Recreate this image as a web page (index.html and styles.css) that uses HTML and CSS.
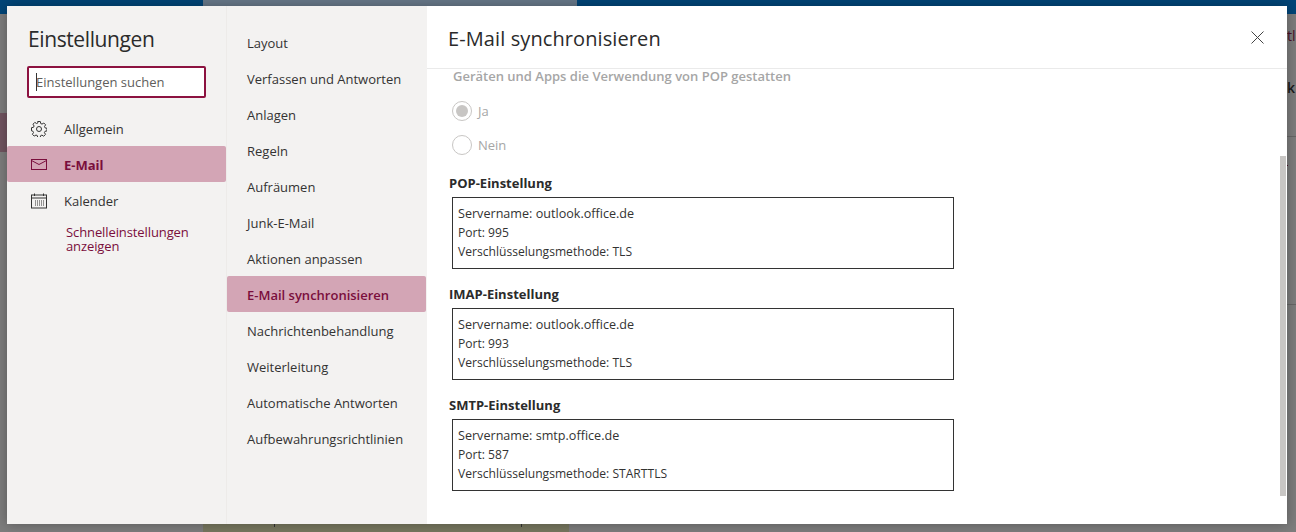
FILE: index.html
```html
<!DOCTYPE html>
<html lang="de">
<head>
<meta charset="utf-8">
<title>Einstellungen</title>
<link rel="stylesheet" href="styles.css">
</head>
<body>
<div class="backdrop">
  <div class="bg-top"><span class="bg-top-light"></span></div>
  <span class="bg-block"></span>
  <span class="bg-text bg-text-a">tlo</span>
  <span class="bg-text bg-text-b">k|y</span>
  <span class="bg-rule bg-rule-a"></span>
  <span class="bg-rule bg-rule-b"></span>
  <span class="bg-dot"></span>
  <span class="bg-bottom"><span class="bg-mark"></span><span class="bg-mark"></span></span>
</div>
<main class="dialog">
  <nav class="col-main">
    <h1 class="title">Einstellungen</h1>
    <div class="search"><span class="caret"></span><span>Einstellungen suchen</span></div>
    <ul class="main-list">
      <li class="main-item">
        <svg class="ico" viewBox="0 0 16 16" fill="none" stroke="#333" stroke-width="1"><circle cx="8" cy="8" r="2.5"/><path d="M6.700.5h2.600l.4 2 1.300.6 1.800-1.100 1.800 1.800-1.100 1.800.6 1.300 1.900.4v2.600l-2 .4-.6 1.300 1.100 1.800-1.800 1.800-1.800-1.100-1.300.6-.4 1.900H6.700l-.4-2-1.300-.6-1.800 1.100-1.800-1.800 1.100-1.800-.6-1.300-1.400-.4V6.700l2-.4.6-1.300-1.100-1.800 1.800-1.800 1.800 1.100 1.300-.6z"/></svg>
        <span>Allgemein</span>
      </li>
      <li class="main-item main-item-on">
        <svg class="ico" viewBox="0 0 16 11" fill="none" stroke="#7a0e3c" stroke-width="1"><rect x=".5" y=".5" width="15" height="10"/><path d="M.5 1.500 8 5.500l7.500-4"/></svg>
        <span>E-Mail</span>
      </li>
      <li class="main-item">
        <svg class="ico" viewBox="0 0 16 15" fill="none" stroke="#333" stroke-width="1"><rect x=".5" y="1.500" width="15" height="13"/><path d="M.5 4.500h15M3.500 0v2.500M12.500 0v2.500"/><path stroke-dasharray="1 1" d="M4 7.500h9M4 9.500h9M4 11.500h9"/></svg>
        <span>Kalender</span>
      </li>
    </ul>
    <a class="quick">Schnelleinstellungen<br>anzeigen</a>
  </nav>
  <nav class="col-sub">
    <ul class="sub-list">
      <li class="sub-item">Layout</li>
      <li class="sub-item">Verfassen und Antworten</li>
      <li class="sub-item">Anlagen</li>
      <li class="sub-item">Regeln</li>
      <li class="sub-item">Aufräumen</li>
      <li class="sub-item">Junk-E-Mail</li>
      <li class="sub-item">Aktionen anpassen</li>
      <li class="sub-item sub-item-on">E-Mail synchronisieren</li>
      <li class="sub-item">Nachrichtenbehandlung</li>
      <li class="sub-item">Weiterleitung</li>
      <li class="sub-item">Automatische Antworten</li>
      <li class="sub-item">Aufbewahrungsrichtlinien</li>
    </ul>
  </nav>
  <section class="col-content">
    <header class="head">
      <h2 class="head-title">E-Mail synchronisieren</h2>
      <svg class="close" viewBox="0 0 13 13" fill="none" stroke="#444" stroke-width="1"><path d="M.5.500l12 12M12.500.500l-12 12"/></svg>
    </header>
    <div class="scroll">
      <div class="body">
        <p class="pop-label">Geräten und Apps die Verwendung von POP gestatten</p>
        <div class="radio"><span class="radio-dot radio-dot-on"></span><span>Ja</span></div>
        <div class="radio"><span class="radio-dot"></span><span>Nein</span></div>
        <h3 class="set-title">POP-Einstellung</h3>
        <div class="box"><div class="box-name">Servername: outlook.office.de</div><div>Port: 995</div><div>Verschlüsselungsmethode: TLS</div></div>
        <h3 class="set-title">IMAP-Einstellung</h3>
        <div class="box"><div class="box-name">Servername: outlook.office.de</div><div>Port: 993</div><div>Verschlüsselungsmethode: TLS</div></div>
        <h3 class="set-title">SMTP-Einstellung</h3>
        <div class="box"><div class="box-name">Servername: smtp.office.de</div><div>Port: 587</div><div>Verschlüsselungsmethode: STARTTLS</div></div>
      </div>
      <div class="track"><span class="thumb"></span></div>
    </div>
  </section>
</main>
</body>
</html>
```
FILE: styles.css
```css
* { box-sizing: border-box; }
html, body { margin: 0; height: 100%; }
body {
  position: relative;
  width: 1296px;
  height: 532px;
  overflow: hidden;
  background: #7d7d7d;
  font-family: "Open Sans", "Noto Sans", sans-serif;
  font-size: 13px;
  color: #333;
  padding: 6px 9px 8px 7px;
}
ul { list-style: none; margin: 0; padding: 0; }
h1, h2, h3, p { margin: 0; font-weight: normal; }

.backdrop { position: absolute; inset: 0; overflow: hidden; }
.bg-top { height: 14px; background: #004578; }
.bg-top-light { display: block; margin-left: 203px; width: 374px; height: 6px; background: #68798a; }
.bg-block { position: absolute; left: 0; top: 113px; width: 7px; height: 39px; background: #705460; }
.bg-bottom { position: absolute; left: 203px; top: 524px; width: 366px; height: 8px; background: #77775f; }
.bg-mark { position: absolute; top: 0; width: 1px; height: 3px; background: #333; }
.bg-mark:first-child { left: 71px; }
.bg-mark:last-child { left: 318px; }
.bg-text { position: absolute; left: 1287px; font-size: 14px; line-height: 18px; white-space: nowrap; }
.bg-text-a { top: 27px; color: #4a0f28; }
.bg-text-b { top: 79px; color: #1a1a1a; font-weight: 600; }
.bg-rule { position: absolute; left: 1287px; width: 9px; height: 1px; background: #666; }
.bg-rule-a { top: 136px; }
.bg-rule-b { top: 304px; }
.bg-dot { position: absolute; left: 1287px; top: 165px; width: 1px; height: 1px; background: #4a0f28; }

.dialog {
  position: relative;
  display: flex;
  width: 1280px;
  height: 518px;
  box-shadow: 0 0 12px rgba(0, 0, 0, .3);
  background: #fff;
}

.col-main { width: 220px; flex: none; background: #f3f2f1; border-right: 1px solid #edebe9; }
.title { font-size: 21px; line-height: 28px; padding: 19px 0 0 21px; color: #2b2b2b; letter-spacing: -.4px; }
.search {
  display: flex;
  align-items: center;
  width: 179px;
  height: 32px;
  margin: 13px 0 0 20px;
  padding-left: 7px;
  border: 2px solid #8c1240;
  border-radius: 2px;
  background: #fff;
  color: #605e5c;
  font-size: 13px;
}
.caret { width: 1px; height: 18px; margin-right: -1px; background: #333; }
.main-list { margin-top: 12px; }
.main-item { display: flex; align-items: center; height: 36px; padding: 1px 0 0 24px; gap: 17px; color: #333; }
.main-item-on { background: #d3a5b5; color: #7a0e3c; font-weight: 700; border-radius: 2px; }
.ico { width: 16px; height: 16px; flex: none; }
.main-item-on .ico { height: 11px; }
.quick { display: block; margin: 7px 0 0 59px; font-size: 13px; line-height: 14px; letter-spacing: -.1px; color: #7a0e3c; }

.col-sub { width: 200px; flex: none; background: #f3f2f1; padding-top: 18px; }
.sub-item { height: 36px; line-height: 38px; padding-left: 20px; color: #333; }
.sub-item-on { margin-right: 1px; border-radius: 2px; background: #d3a5b5; color: #7a0e3c; font-weight: 600; }

.col-content { flex: 1; min-width: 0; display: flex; flex-direction: column; background: #fff; }
.head { flex: none; display: flex; align-items: center; justify-content: space-between; height: 63px; padding: 2px 23px 0 21px; border-bottom: 1px solid #eaeaea; }
.head-title { font-size: 20px; color: #2b2b2b; letter-spacing: .1px; }
.close { width: 13px; height: 13px; margin-top: -2px; }
.scroll { flex: 1; min-height: 0; display: flex; position: relative; overflow: hidden; }
.body { flex: 1; padding: 0 0 0 25px; }
.pop-label { font-weight: 600; color: #a6a6a6; line-height: 14px; margin-left: 1px; }
.radio { display: flex; align-items: center; height: 34px; gap: 6px; color: #a6a6a6; }
.radio:first-of-type { margin-top: 11px; }
.radio-dot { width: 20px; height: 20px; border: 1px solid #c8c6c4; border-radius: 50%; display: flex; align-items: center; justify-content: center; }
.radio-dot-on::after { content: ""; width: 12px; height: 12px; border-radius: 50%; background: #c8c6c4; }
.set-title { font-weight: 700; font-size: 13px; color: #2b2b2b; line-height: 18px; margin: 0 0 5px -3px; }
.radio + .set-title { margin-top: 12px; }
.box + .set-title { margin-top: 16px; }
.box { width: 502px; height: 72px; border: 1px solid #333; padding: 6px 5px; line-height: 19px; font-size: 12.1px; color: #333; }
.box-name { font-size: 12.6px; }
.track { position: absolute; right: 1px; top: 87px; bottom: 28px; width: 6px; }
.thumb { display: block; height: 100%; background: #c8c6c4; }
```
